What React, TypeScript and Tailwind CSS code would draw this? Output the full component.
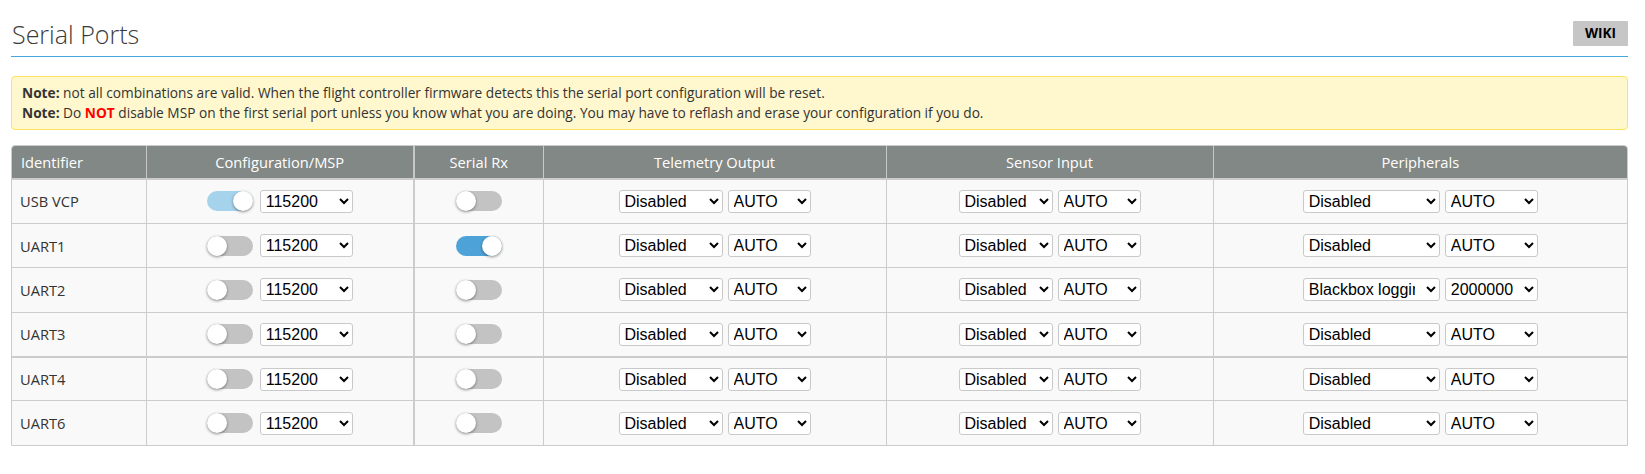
import React from "react";

type Port = {
  id: string;
  msp: "on" | "off" | "locked";
  rx: boolean;
  periph: string;
  periphBaud: string;
  split?: boolean;
};

const ports: Port[] = [
  { id: "USB VCP", msp: "locked", rx: false, periph: "Disabled", periphBaud: "AUTO" },
  { id: "UART1", msp: "off", rx: true, periph: "Disabled", periphBaud: "AUTO" },
  { id: "UART2", msp: "off", rx: false, periph: "Blackbox logging", periphBaud: "2000000" },
  { id: "UART3", msp: "off", rx: false, periph: "Disabled", periphBaud: "AUTO" },
  { id: "UART4", msp: "off", rx: false, periph: "Disabled", periphBaud: "AUTO", split: true },
  { id: "UART6", msp: "off", rx: false, periph: "Disabled", periphBaud: "AUTO" },
];

const bauds = ["AUTO", "9600", "19200", "38400", "57600", "115200", "230400", "250000", "2000000"];

// native select, chrome draws the arrow
const Select = ({ value, options, className }: { value: string; options: string[]; className: string }) => (
  <select
    defaultValue={value}
    className={`h-[23px] rounded-[3px] border border-[#c9c9c9] bg-white pl-[1px] pr-[8px] text-[16px] text-black font-[family-name:'Liberation_Sans',Arial,sans-serif] ${className}`}
  >
    {options.map((o) => (
      <option key={o}>{o}</option>
    ))}
  </select>
);

const Toggle = ({ state }: { state: "on" | "off" | "locked" }) => {
  const track =
    state === "on" ? "bg-[#4da3d8] justify-end" : state === "locked" ? "bg-[#a6d3ec] justify-end" : "bg-[#c3c3c3] justify-start";
  return (
    <div className={`flex h-[20px] w-[46px] items-center rounded-full ${track}`}>
      <div className="h-[20px] w-[20px] rounded-full bg-white shadow-[0_1px_3px_rgba(0,0,0,0.45)]" />
    </div>
  );
};

export default function App() {
  return (
    <div className="min-h-screen bg-white pl-[11px] pr-[17px] text-[#333] font-[family-name:'Open_Sans',sans-serif]">
      {/* title bar */}
      <div className="flex h-[57px] items-end justify-between border-b border-[#45a6dc] pb-[6px]">
        <h1 className="pl-[1px] text-[25px] font-light leading-[32px] text-[#3a3a3a]">Serial Ports</h1>
        <a className="mb-[4px] flex h-[25px] w-[55px] items-center justify-center rounded-[1px] bg-[#c6c6c6] text-[13.5px] font-bold text-black">
          WIKI
        </a>
      </div>

      {/* notes */}
      <div className="mt-[19px] rounded-[4px] border border-[#ffe35c] bg-[#fff7cd] px-[10px] py-[6px] text-[13.7px] leading-[20px] text-[#333]">
        <p>
          <b>Note:</b> not all combinations are valid. When the flight controller firmware detects this the serial port
          configuration will be reset.
        </p>
        <p>
          <b>Note:</b> Do <b className="text-[#f00]">NOT</b> disable MSP on the first serial port unless you know what you
          are doing. You may have to reflash and erase your configuration if you do.
        </p>
      </div>

      {/* ports table */}
      <div className="mt-[15px] overflow-hidden rounded-t-[4px] border border-[#cccccc]">
        <table className="w-full table-fixed border-collapse text-[14.67px]">
          <colgroup>
            <col className="w-[134px]" />
            <col className="w-[268px]" />
            <col className="w-[129px]" />
            <col className="w-[343px]" />
            <col className="w-[327px]" />
            <col />
          </colgroup>
          <thead>
            <tr className="h-[33px] border-b-2 border-[#cccccc] bg-[#828885] font-normal text-white">
              <th className="pl-[9px] text-left font-normal">Identifier</th>
              <th className="border-l border-[#c8c8c8] font-normal">Configuration/MSP</th>
              <th className="border-l-2 border-[#c8c8c8] font-normal">Serial Rx</th>
              <th className="border-l border-[#c8c8c8] font-normal">Telemetry Output</th>
              <th className="border-l border-[#c8c8c8] font-normal">Sensor Input</th>
              <th className="border-l border-[#c8c8c8] font-normal">Peripherals</th>
            </tr>
          </thead>
          <tbody>
            {ports.map((p) => (
              <tr
                key={p.id}
                className={`h-[44.4px] bg-[#f9f9f9] ${p.split ? "border-t-2" : "border-t"} border-[#cccccc]`}
              >
                <td className="pl-[8px] text-[#333]">{p.id}</td>
                <td className="border-l border-[#cccccc]">
                  <div className="flex items-center justify-center gap-[7px]">
                    <Toggle state={p.msp} />
                    <Select value="115200" options={bauds.slice(1)} className="w-[93px]" />
                  </div>
                </td>
                <td className="border-l-2 border-[#cccccc]">
                  <div className="flex justify-center">
                    <Toggle state={p.rx ? "on" : "off"} />
                  </div>
                </td>
                <td className="border-l border-[#cccccc]">
                  <div className="flex items-center justify-center gap-[5px]">
                    <Select value="Disabled" options={["Disabled", "FrSky", "HoTT", "SmartPort", "LTM", "MAVLink"]} className="w-[104px]" />
                    <Select value="AUTO" options={bauds} className="w-[83px]" />
                  </div>
                </td>
                <td className="border-l border-[#cccccc]">
                  <div className="flex items-center justify-center gap-[5px]">
                    <Select value="Disabled" options={["Disabled", "GPS", "ESC"]} className="w-[94px]" />
                    <Select value="AUTO" options={bauds} className="w-[83px]" />
                  </div>
                </td>
                <td className="border-l border-[#cccccc]">
                  <div className="flex items-center justify-center gap-[5px]">
                    <Select
                      value={p.periph}
                      options={["Disabled", "Blackbox logging", "VTX (TBS SmartAudio)", "VTX (IRC Tramp)"]}
                      className="w-[137px]"
                    />
                    <Select value={p.periphBaud} options={bauds} className="w-[93px]" />
                  </div>
                </td>
              </tr>
            ))}
          </tbody>
        </table>
      </div>
    </div>
  );
}
